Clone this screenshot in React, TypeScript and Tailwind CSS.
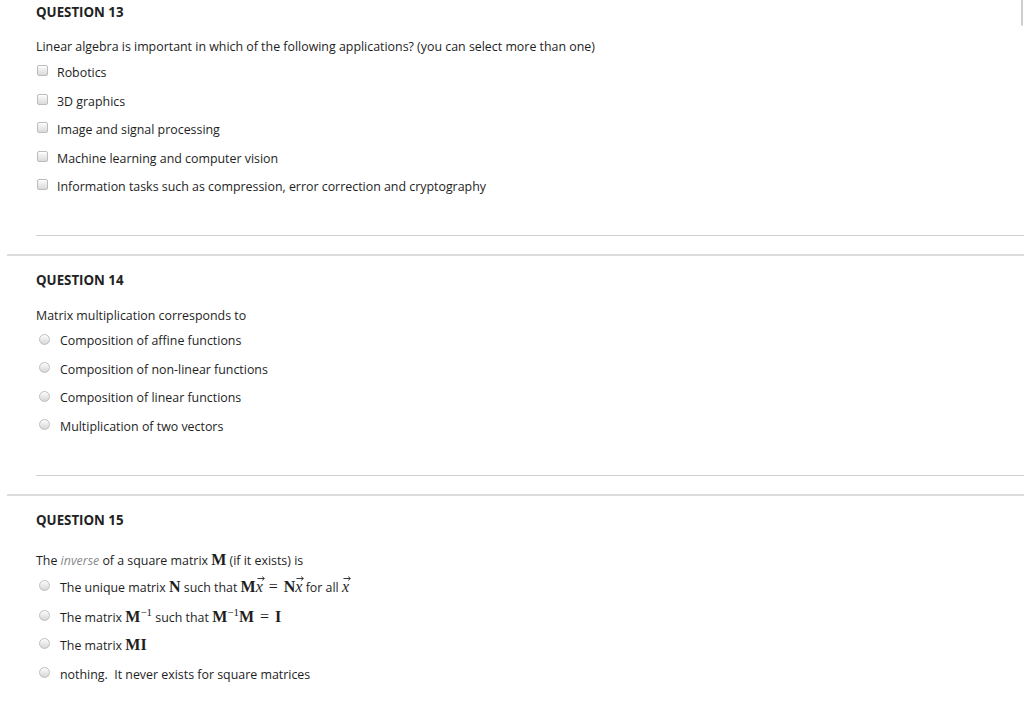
import React from 'react';

type Kind = 'check' | 'radio';

function Box({ kind }: { kind: Kind }) {
  if (kind === 'check') {
    return (
      <span className="mt-[-5px] ml-[1px] inline-block h-[11px] w-[11px] shrink-0 rounded-[2px] border border-[#bcbcbc] bg-gradient-to-b from-[#fcfcfc] to-[#dadada] shadow-[inset_0_1px_0_#fff]" />
    );
  }
  return (
    <span className="mt-[-4px] ml-[3px] inline-block h-[11px] w-[11px] shrink-0 rounded-full border border-[#c0c0c0] bg-gradient-to-b from-[#fdfdfd] to-[#d6d6d6]" />
  );
}

function Option({ kind, children }: { kind: Kind; children: React.ReactNode }) {
  return (
    <div className={'flex h-[18px] items-center ' + (kind === 'check' ? 'gap-[9px]' : 'gap-[10px]')}>
      <Box kind={kind} />
      <span className="whitespace-nowrap">{children}</span>
    </div>
  );
}

function Heading({ children }: { children: React.ReactNode }) {
  return <div className="h-[18px] text-[13.3px] font-bold leading-[18px] text-[#222]">{children}</div>;
}

function Bm({ children }: { children: React.ReactNode }) {
  return (
    <span className="font-['Liberation_Serif','Times_New_Roman',serif] text-[16px] font-bold leading-none">
      {children}
    </span>
  );
}

// italic x with a small vector arrow drawn above it
function Vx() {
  return (
    <span className="relative inline-block font-['Liberation_Serif','Times_New_Roman',serif] text-[16px] italic leading-none">
      x
      <svg
        viewBox="0 0 8 5"
        className="absolute left-[1px] top-[-3px] h-[5px] w-[8px]"
        fill="none"
        stroke="#222"
        strokeWidth="0.9"
      >
        <path d="M0.5 2.5 H7.2 M5.2 0.6 L7.4 2.5 L5.2 4.4" />
      </svg>
    </span>
  );
}

function Sup() {
  return (
    <span className="relative top-[-6px] font-['Liberation_Serif','Times_New_Roman',serif] text-[11px] leading-none">
      −1
    </span>
  );
}

function Eq() {
  return <span className="mx-[6px] font-['Liberation_Serif','Times_New_Roman',serif] text-[16px]">=</span>;
}

function Dividers() {
  return (
    <>
      <div className="ml-[36px] mt-[39px] h-px bg-[#cfcfcf]" />
      <div className="ml-[7px] mt-[18px] h-[2px] bg-[#dcdcdc]" />
    </>
  );
}

export default function App() {
  return (
    <div className="relative h-[716px] w-full overflow-hidden bg-white font-['Open_Sans','Liberation_Sans',sans-serif] text-[12.4px] leading-[18px] text-[#1e1e1e]">
      <div className="absolute right-[1px] top-0 h-[26px] w-[2px] rounded-b bg-[#cfcfcf]" />

      {/* Question 13 */}
      <div className="pl-[36px] pt-[3px]">
        <Heading>QUESTION 13</Heading>
        <div className="mt-[17px] h-[18px]">
          Linear algebra is important in which of the following applications? (you can select more than one)
        </div>
        <div className="mt-[8px] flex flex-col gap-[10.5px]">
          <Option kind="check">Robotics</Option>
          <Option kind="check">3D graphics</Option>
          <Option kind="check">Image and signal processing</Option>
          <Option kind="check">Machine learning and computer vision</Option>
          <Option kind="check">Information tasks such as compression, error correction and cryptography</Option>
        </div>
      </div>
      <Dividers />

      {/* Question 14 */}
      <div className="pl-[36px] pt-[15px]">
        <Heading>QUESTION 14</Heading>
        <div className="mt-[18px] h-[18px]">Matrix multiplication corresponds to</div>
        <div className="mt-[7px] flex flex-col gap-[10.67px]">
          <Option kind="radio">Composition of affine functions</Option>
          <Option kind="radio">Composition of non-linear functions</Option>
          <Option kind="radio">Composition of linear functions</Option>
          <Option kind="radio">Multiplication of two vectors</Option>
        </div>
      </div>
      <Dividers />

      {/* Question 15 */}
      <div className="pl-[36px] pt-[15px]">
        <Heading>QUESTION 15</Heading>
        <div className="mt-[23px] h-[18px] whitespace-nowrap">
          The <span className="italic text-[#8a8a8a]">inverse</span> of a square matrix <Bm>M</Bm> (if it exists) is
        </div>
        <div className="mt-[9px] flex flex-col">
          <Option kind="radio">
            The unique matrix <Bm>N</Bm> such that <Bm>M</Bm>
            <Vx />
            <Eq />
            <Bm>N</Bm>
            <Vx /> for all <Vx />
          </Option>
          <div className="mt-[12px]">
            <Option kind="radio">
              The matrix <Bm>M</Bm>
              <Sup /> such that <Bm>M</Bm>
              <Sup />
              <Bm>M</Bm>
              <Eq />
              <Bm>I</Bm>
            </Option>
          </div>
          <div className="mt-[10px]">
            <Option kind="radio">
              The matrix <Bm>MI</Bm>
            </Option>
          </div>
          <div className="mt-[11px]">
            <Option kind="radio">nothing.&nbsp; It never exists for square matrices</Option>
          </div>
        </div>
      </div>
    </div>
  );
}
